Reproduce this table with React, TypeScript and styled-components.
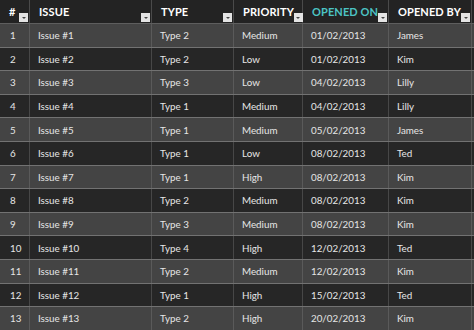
import styled, { createGlobalStyle } from 'styled-components';

const GlobalStyle = createGlobalStyle`
  html, body {
    margin: 0;
    padding: 0;
    background: #2b2b2b;
  }
  body {
    font-family: Lato, "Open Sans", sans-serif;
  }
`;

const COLUMNS = '30px 122px 82px 69px 86px 83px';

const Sheet = styled.div`
  width: 474px;
  height: 330px;
  overflow: hidden;
  background: #2b2b2b;
`;

const HeaderRow = styled.div`
  display: grid;
  grid-template-columns: ${COLUMNS};
  height: 23px;
  background: #232323;
  border-bottom: 1px solid #5e5e5e;
`;

const HeadCell = styled.div<{ $accent?: boolean }>`
  display: flex;
  justify-content: space-between;
  align-items: center;
  padding: 0 1px 0 9px;
  border-right: 1px solid #4a4a4a;
  color: ${(p) => (p.$accent ? '#4cc3c3' : '#ffffff')};
  font-size: 11px;
  font-weight: 700;
  letter-spacing: 0.1px;
  white-space: nowrap;
`;

const HeadLabel = styled.span`
  padding-bottom: 1px;
`;

const FilterButton = styled.span`
  align-self: flex-end;
  flex: 0 0 auto;
  width: 9px;
  height: 9px;
  margin-bottom: 1px;
  background: #e4e4e4;
  display: flex;
  align-items: center;
  justify-content: center;

  &::after {
    content: '';
    border-left: 2px solid transparent;
    border-right: 2px solid transparent;
    border-top: 2px solid #444;
  }
`;

const Row = styled.div<{ $odd: boolean }>`
  display: grid;
  grid-template-columns: ${COLUMNS};
  height: 23.6px;
  box-sizing: border-box;
  background: ${(p) => (p.$odd ? '#444444' : '#262626')};
  border-bottom: 1px solid #727272;
`;

const Cell = styled.div<{ $odd: boolean }>`
  display: flex;
  align-items: center;
  padding-left: 8px;
  border-right: 1px solid ${(p) => (p.$odd ? '#5a5a5a' : '#474747')};
  color: #e6e6e6;
  font-size: 9.8px;
  white-space: nowrap;
`;

const NumCell = styled(Cell)`
  padding-left: 10px;
`;

interface Issue {
  id: number;
  type: string;
  priority: string;
  opened: string;
  by: string;
}

const issues: Issue[] = [
  { id: 1, type: 'Type 2', priority: 'Medium', opened: '01/02/2013', by: 'James' },
  { id: 2, type: 'Type 2', priority: 'Low', opened: '01/02/2013', by: 'Kim' },
  { id: 3, type: 'Type 3', priority: 'Low', opened: '04/02/2013', by: 'Lilly' },
  { id: 4, type: 'Type 1', priority: 'Medium', opened: '04/02/2013', by: 'Lilly' },
  { id: 5, type: 'Type 1', priority: 'Medium', opened: '05/02/2013', by: 'James' },
  { id: 6, type: 'Type 1', priority: 'Low', opened: '08/02/2013', by: 'Ted' },
  { id: 7, type: 'Type 1', priority: 'High', opened: '08/02/2013', by: 'Kim' },
  { id: 8, type: 'Type 2', priority: 'Medium', opened: '08/02/2013', by: 'Kim' },
  { id: 9, type: 'Type 3', priority: 'Medium', opened: '08/02/2013', by: 'Kim' },
  { id: 10, type: 'Type 4', priority: 'High', opened: '12/02/2013', by: 'Ted' },
  { id: 11, type: 'Type 2', priority: 'Medium', opened: '12/02/2013', by: 'Kim' },
  { id: 12, type: 'Type 1', priority: 'High', opened: '15/02/2013', by: 'Ted' },
  { id: 13, type: 'Type 2', priority: 'High', opened: '20/02/2013', by: 'Kim' },
];

const headers = ['#', 'ISSUE', 'TYPE', 'PRIORITY', 'OPENED ON', 'OPENED BY'];

function App() {
  return (
    <>
      <GlobalStyle />
      <Sheet>
        <HeaderRow>
          {headers.map((h) => (
            <HeadCell key={h} $accent={h === 'OPENED ON'}>
              <HeadLabel>{h}</HeadLabel>
              <FilterButton />
            </HeadCell>
          ))}
        </HeaderRow>
        {issues.map((issue) => {
          const odd = issue.id % 2 === 1;
          return (
            <Row key={issue.id} $odd={odd}>
              <NumCell $odd={odd}>{issue.id}</NumCell>
              <Cell $odd={odd}>Issue #{issue.id}</Cell>
              <Cell $odd={odd}>{issue.type}</Cell>
              <Cell $odd={odd}>{issue.priority}</Cell>
              <Cell $odd={odd}>{issue.opened}</Cell>
              <Cell $odd={odd}>{issue.by}</Cell>
            </Row>
          );
        })}
      </Sheet>
    </>
  );
}

export default App;
